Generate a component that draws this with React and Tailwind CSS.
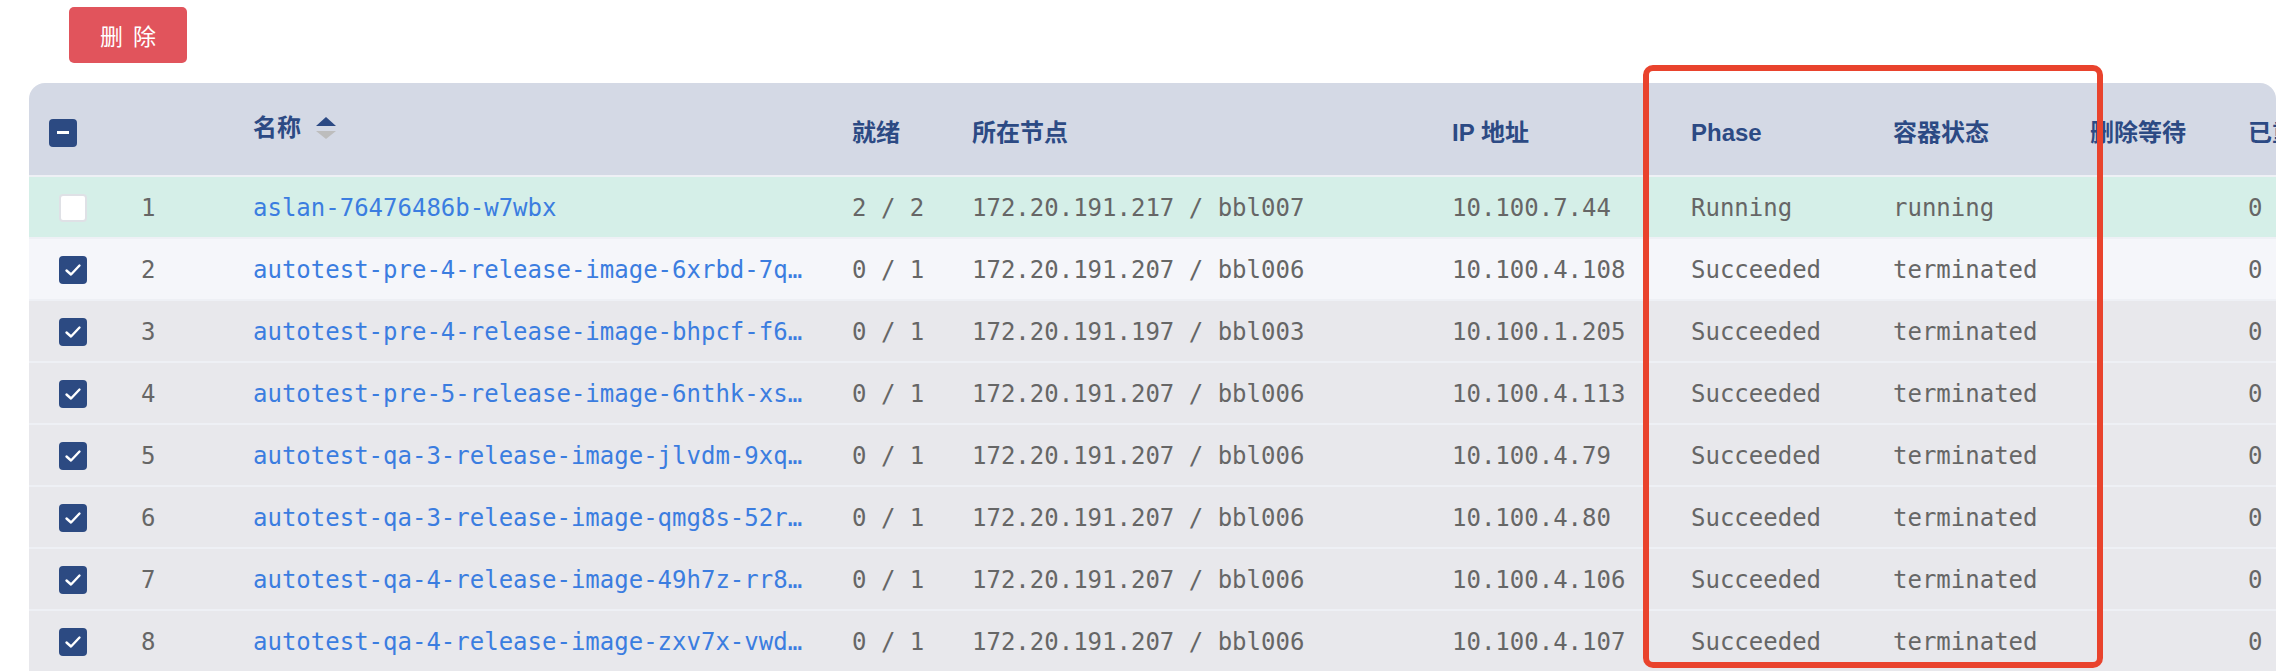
import React from 'react';

const mono = "font-['DejaVu_Sans_Mono',monospace]";
const sans = "font-['Liberation_Sans','Noto_Sans_CJK_SC',sans-serif]";

const pods = [
  { name: 'aslan-76476486b-w7wbx', ready: '2 / 2', node: '172.20.191.217 / bbl007', ip: '10.100.7.44', phase: 'Running', status: 'running', checked: false, bg: 'bg-[#d5efe8]' },
  { name: 'autotest-pre-4-release-image-6xrbd-7qk2m', ready: '0 / 1', node: '172.20.191.207 / bbl006', ip: '10.100.4.108', phase: 'Succeeded', status: 'terminated', checked: true, bg: 'bg-[#f5f6fa]' },
  { name: 'autotest-pre-4-release-image-bhpcf-f6t9w', ready: '0 / 1', node: '172.20.191.197 / bbl003', ip: '10.100.1.205', phase: 'Succeeded', status: 'terminated', checked: true, bg: 'bg-[#e8e8ec]' },
  { name: 'autotest-pre-5-release-image-6nthk-xs8pq', ready: '0 / 1', node: '172.20.191.207 / bbl006', ip: '10.100.4.113', phase: 'Succeeded', status: 'terminated', checked: true, bg: 'bg-[#e8e8ec]' },
  { name: 'autotest-qa-3-release-image-jlvdm-9xqz4', ready: '0 / 1', node: '172.20.191.207 / bbl006', ip: '10.100.4.79', phase: 'Succeeded', status: 'terminated', checked: true, bg: 'bg-[#e8e8ec]' },
  { name: 'autotest-qa-3-release-image-qmg8s-52rkd', ready: '0 / 1', node: '172.20.191.207 / bbl006', ip: '10.100.4.80', phase: 'Succeeded', status: 'terminated', checked: true, bg: 'bg-[#e8e8ec]' },
  { name: 'autotest-qa-4-release-image-49h7z-rr8vn', ready: '0 / 1', node: '172.20.191.207 / bbl006', ip: '10.100.4.106', phase: 'Succeeded', status: 'terminated', checked: true, bg: 'bg-[#e8e8ec]' },
  { name: 'autotest-qa-4-release-image-zxv7x-vwd5j', ready: '0 / 1', node: '172.20.191.207 / bbl006', ip: '10.100.4.107', phase: 'Succeeded', status: 'terminated', checked: true, bg: 'bg-[#e8e8ec]' },
];

const cols = 'grid grid-cols-[112px_112px_599px_120px_480px_239px_202px_197px_158px_220px]';

const Checkbox = ({ checked }) =>
  checked ? (
    <div className="w-[28px] h-[28px] rounded-[4px] bg-[#2c4a82] flex items-center justify-center">
      <svg width="28" height="28" viewBox="0 0 28 28">
        <polyline points="7.5,14.5 12,18.5 20.5,9.5" fill="none" stroke="white" strokeWidth="2.4" strokeLinecap="round" strokeLinejoin="round" />
      </svg>
    </div>
  ) : (
    <div className="w-[28px] h-[28px] rounded-[4px] bg-white border-2 border-[#dfe1e6]" />
  );

const SortIcon = () => (
  <svg width="20" height="22" viewBox="0 0 20 22">
    <polygon points="0,9 10,0 20,9" fill="#2c4a84" />
    <polygon points="0,14 20,14 10,22" fill="#bdbdbd" />
  </svg>
);

const App = () => {
  return (
    <div className="relative w-[2276px] h-[672px] overflow-hidden bg-white">
      {/* Toolbar */}
      <div className="pl-[69px] pt-[7px]">
        <button className="w-[118px] h-[56px] rounded-[5px] bg-[#e1545c] text-white text-[23px] font-['Noto_Sans_CJK_SC',sans-serif] flex items-center justify-center gap-[10px]">
          <span>删</span>
          <span>除</span>
        </button>
      </div>

      {/* Table */}
      <div className="ml-[29px] mt-[20px] w-[2247px] rounded-t-[16px] overflow-hidden">
        <div className={`${cols} h-[92px] items-center bg-[#d4d9e5] text-[24px] font-bold text-[#2c4a84] ${sans}`}>
          <div className="pl-[20px] pt-[7px]">
            <div className="w-[28px] h-[28px] rounded-[4px] bg-[#2c4a82] flex items-center justify-center">
              <span className="block w-[12px] h-[3px] bg-white" />
            </div>
          </div>
          <div />
          <div className="flex items-center gap-[15px] pb-[2px]">
            <span>名称</span>
            <SortIcon />
          </div>
          <div className="pt-[7px] whitespace-nowrap">就绪</div>
          <div className="pt-[7px] whitespace-nowrap">所在节点</div>
          <div className="pt-[7px] whitespace-nowrap">IP 地址</div>
          <div className="pt-[7px] whitespace-nowrap">Phase</div>
          <div className="pt-[7px] whitespace-nowrap">容器状态</div>
          <div className="pt-[7px] whitespace-nowrap">删除等待</div>
          <div className="pt-[7px] whitespace-nowrap">已重启次数</div>
        </div>

        {pods.map((pod, index) => (
          <div
            key={pod.name}
            className={`${cols} h-[62px] pt-[2px] items-center border-t-2 border-[#eef0f5] ${pod.bg} text-[24px] text-[#666666] ${mono}`}
          >
            <div className="pl-[30px]">
              <Checkbox checked={pod.checked} />
            </div>
            <div>{index + 1}</div>
            <div className="pr-[40px]">
              <span className="block max-w-[550px] truncate text-[#3b7de0]">{pod.name}</span>
            </div>
            <div className="whitespace-nowrap">{pod.ready}</div>
            <div className="whitespace-nowrap">{pod.node}</div>
            <div className="whitespace-nowrap">{pod.ip}</div>
            <div>{pod.phase}</div>
            <div>{pod.status}</div>
            <div />
            <div>0</div>
          </div>
        ))}
      </div>

      {/* Highlight annotation */}
      <div className="absolute left-[1643px] top-[65px] w-[460px] h-[603px] border-[6px] border-[#e9432d] rounded-[10px] pointer-events-none" />
    </div>
  );
};

export default App;
